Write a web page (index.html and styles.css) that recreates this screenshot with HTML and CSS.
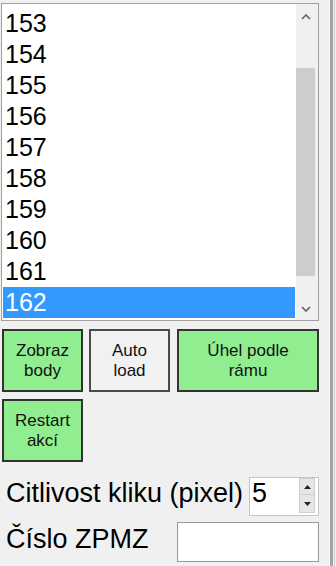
FILE: index.html
```html
<!DOCTYPE html>
<html lang="cs">
<head>
<meta charset="utf-8">
<title>Panel</title>
<link rel="stylesheet" href="styles.css">
</head>
<body>
<div class="app">
  <div class="panel">
    <div class="listbox">
      <div class="items">
        <div class="item">153</div>
        <div class="item">154</div>
        <div class="item">155</div>
        <div class="item">156</div>
        <div class="item">157</div>
        <div class="item">158</div>
        <div class="item">159</div>
        <div class="item">160</div>
        <div class="item">161</div>
        <div class="item selected">162</div>
      </div>
      <div class="scrollbar">
        <div class="sb-btn sb-up">
          <svg width="10" height="6" viewBox="0 0 10 6"><path d="M1 5 L5 1 L9 5" fill="none" stroke="#606060" stroke-width="1.6"/></svg>
        </div>
        <div class="sb-track"><div class="sb-thumb"></div></div>
        <div class="sb-btn sb-down">
          <svg width="10" height="6" viewBox="0 0 10 6"><path d="M1 1 L5 5 L9 1" fill="none" stroke="#606060" stroke-width="1.6"/></svg>
        </div>
      </div>
    </div>

    <div class="btn-row">
      <div class="btn green w81">Zobraz<br>body</div>
      <div class="btn gray w81 gap6">Auto<br>load</div>
      <div class="btn green w142 gap7">Úhel podle<br>rámu</div>
    </div>
    <div class="btn-row row2">
      <div class="btn green w81">Restart<br>akcí</div>
    </div>

    <div class="field-row r1">
      <div class="label l1">Citlivost kliku (pixel)</div>
      <div class="numbox">
        <div class="numval">5</div>
        <div class="spin">
          <div class="spin-btn spin-up"><svg width="7" height="4" viewBox="0 0 7 4"><path d="M0 4 L3.5 0 L7 4 Z" fill="#222"/></svg></div>
          <div class="spin-btn spin-down"><svg width="7" height="4" viewBox="0 0 7 4"><path d="M0 0 L3.5 4 L7 0 Z" fill="#222"/></svg></div>
        </div>
      </div>
    </div>
    <div class="field-row r2">
      <div class="label l2">Číslo ZPMZ</div>
      <div class="textbox"></div>
    </div>
  </div>
  <div class="splitter"></div>
</div>
</body>
</html>
```
FILE: styles.css
```css
* { box-sizing: border-box; }
html, body { margin: 0; padding: 0; }
body {
  background: #f0f0f0;
  font-family: "Liberation Sans", Arial, sans-serif;
  color: #000;
  width: 336px;
  height: 566px;
  overflow: hidden;
}
.app {
  display: flex;
  height: 566px;
}
.panel {
  width: 326px;
  padding: 3px 0 0 1px;
  display: flex;
  flex-direction: column;
}
.splitter {
  width: 10px;
  background: linear-gradient(to right,
    #f0f0f0 0 3px, #fbfbfb 3px 4px, #a3a3a3 4px 7px,
    #f0f0f0 7px 8px, #d0d0d0 8px 9px, #f0f0f0 9px 10px);
}

/* listbox */
.listbox {
  width: 318px;
  height: 318px;
  border: 1px solid #a0a0a0;
  background: #fff;
  display: flex;
}
.items {
  flex: 1;
  padding: 4px 1px 0 1px;
}
.item {
  height: 31px;
  line-height: 31px;
  font-size: 25px;
  padding-left: 2px;
  white-space: nowrap;
}
.item.selected {
  background: #3399ff;
  color: #fff;
}
.scrollbar {
  width: 22px;
  background: #f0f0f0;
  display: flex;
  flex-direction: column;
}
.sb-btn {
  display: flex;
  align-items: center;
  justify-content: center;
  padding-right: 2px;
}
.sb-up { height: 26px; }
.sb-down { height: 23px; }
.sb-track { flex: 1; }
.sb-thumb {
  margin-top: 38px;
  width: 19px;
  height: 208px;
  background: #cdcdcd;
}

/* buttons */
.btn-row {
  display: flex;
  margin-top: 8px;
  margin-left: 1px;
}
.btn-row.row2 { margin-top: 7px; }
.btn {
  height: 63px;
  border: 2px solid #333;
  font-size: 17px;
  line-height: 20px;
  text-align: center;
  display: flex;
  align-items: center;
  justify-content: center;
  color: #111;
}
.green { background: #90ee90; }
.gray { background: #f1f1f1; border-color: #4a4a4a; }
.w81 { width: 81px; }
.w142 { width: 142px; }
.gap6 { margin-left: 6px; }
.gap7 { margin-left: 7px; }

/* fields */
.field-row {
  width: 318px;
  display: flex;
  align-items: flex-start;
}
.field-row.r1 { margin-top: 15px; height: 39px; }
.field-row.r2 { margin-top: 6px; height: 40px; }
.label {
  font-size: 27px;
  padding-left: 5px;
  white-space: nowrap;
}
.l1 { line-height: 33px; }
.l2 { line-height: 34px; }
.numbox {
  margin-left: auto;
  width: 70px;
  height: 39px;
  border: 1px solid #c4c4c4;
  background: #fff;
  display: flex;
}
.numval {
  flex: 1;
  font-size: 27px;
  line-height: 30px;
  padding-left: 2px;
}
.spin {
  width: 16px;
  margin: 0 3px 0 0;
  padding-top: 0;
  display: flex;
  flex-direction: column;
}
.spin-btn {
  display: flex;
  align-items: center;
  justify-content: center;
  background: #e6e6e6;
  border: 1px solid #cfcfcf;
}
.spin-up { height: 17px; }
.spin-down { height: 18px; border-top: none; }
.textbox {
  margin-left: auto;
  width: 142px;
  height: 40px;
  border: 1px solid #9a9a9a;
  background: #fff;
}
```
